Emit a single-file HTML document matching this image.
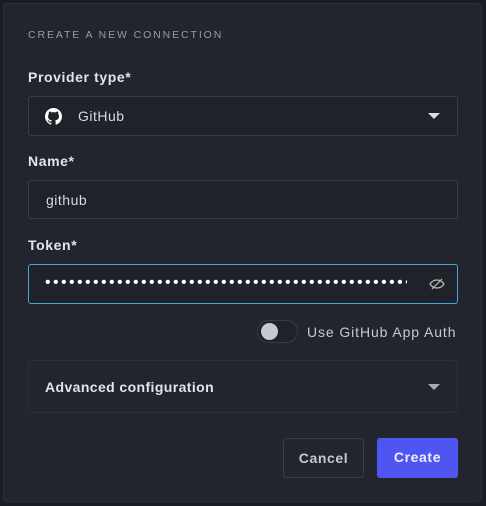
<!DOCTYPE html><html><head><style>
body{margin:0;width:486px;height:506px;background:#1b1d24;font-family:"Liberation Sans",sans-serif;position:relative;overflow:hidden}
.p{position:absolute;left:3px;top:3px;width:477px;height:497px;background:#22252d;border:1px solid #2c2f38;border-radius:4px}
.a{position:absolute}
.t{left:28px;top:29px;font-size:10.5px;letter-spacing:1.9px;color:#9a9ca3}
.l{left:28px;font-size:14px;font-weight:bold;color:#e3e4e8;letter-spacing:0.6px}
.in{left:28px;width:430px;height:38px;border:1px solid #3a3d47;border-radius:3px;background:#1f2229;color:#d8d9dd;font-size:14px;box-sizing:border-box;letter-spacing:0.5px}
.btn{height:40px;top:438px;border-radius:3px;font-size:14px;font-weight:bold;box-sizing:border-box;text-align:center;line-height:38px;letter-spacing:0.6px}
</style></head><body>
<div class="p"></div>
<div class="a t">CREATE A NEW CONNECTION</div>
<div class="a l" style="top:69px">Provider type*</div>
<div class="a in" style="top:96px;height:40px">
<svg style="position:absolute;left:16px;top:11px" width="17" height="17" viewBox="0 0 16 16"><path fill="#fff" d="M8 0C3.58 0 0 3.58 0 8c0 3.54 2.290 6.53 5.47 7.59.4.07.55-.17.55-.38v-1.33c-2.230.48-2.7-1.07-2.7-1.07-.36-.92-.89-1.170-.89-1.17-.73-.5.06-.49.06-.49.8.06 1.230.83 1.230.83.71 1.220 1.870.87 2.330.66.07-.52.28-.87.51-1.070-1.780-.2-3.64-.89-3.64-3.95 0-.87.31-1.59.82-2.150-.08-.2-.36-1.020.08-2.120 0 0 .67-.21 2.2.82a7.6 7.6 0 0 1 4 0c1.530-1.040 2.2-.82 2.2-.82.44 1.1.16 1.920.08 2.120.51.56.82 1.270.82 2.150 0 3.070-1.870 3.750-3.650 3.950.29.25.54.73.54 1.480v2.2c0 .21.15.46.55.38A8 8 0 0 0 16 8c0-4.420-3.580-8-8-8z"/></svg>
<span style="position:absolute;left:49px;top:11px">GitHub</span>
<div style="position:absolute;right:17px;top:16px;border-left:6px solid transparent;border-right:6px solid transparent;border-top:6px solid #ddd"></div></div>
<div class="a l" style="top:153px">Name*</div>
<div class="a in" style="top:180px;height:39px"><span style="position:absolute;left:17px;top:11px">github</span></div>
<div class="a l" style="top:237px">Token*</div>
<div class="a in" style="top:264px;height:40px;border-color:#4aa3df"><span style="position:absolute;left:16px;top:9px;font-size:16px;letter-spacing:2.4px;color:#fff;white-space:nowrap;overflow:hidden;width:362px">••••••••••••••••••••••••••••••••••••••••••••••••</span>
<svg style="position:absolute;right:12px;top:12px" width="16" height="14" viewBox="0 0 16 14"><path d="M1 7c2-3 4-4 7-4s5 1 7 4c-2 3-4 4-7 4S3 10 1 7z" fill="none" stroke="#bbb" stroke-width="1.2"/><path d="M3 12L13 2" stroke="#bbb" stroke-width="1.2"/></svg></div>
<div class="a" style="left:257px;top:320px;width:41px;height:23px;border:1px solid #3a3d47;border-radius:12px;box-sizing:border-box;background:#1f2229"><div style="position:absolute;left:3px;top:2px;width:17px;height:17px;border-radius:50%;background:#c7c9d1"></div></div>
<div class="a" style="left:307px;top:324px;font-size:14px;color:#c8c9ce;letter-spacing:0.9px">Use GitHub App Auth</div>
<div class="a" style="left:28px;top:360px;width:430px;height:53px;border:1px solid #2c2f38;border-radius:4px;box-sizing:border-box">
<span style="position:absolute;left:16px;top:18px;font-size:14px;font-weight:bold;color:#e3e4e8;letter-spacing:0.4px">Advanced configuration</span>
<div style="position:absolute;right:17px;top:23px;border-left:6px solid transparent;border-right:6px solid transparent;border-top:6px solid #aaa"></div></div>
<div class="a btn" style="left:283px;width:81px;border:1px solid #3a3d47;color:#c8c9ce">Cancel</div>
<div class="a btn" style="left:377px;width:81px;background:#4f55f0;color:#eef">Create</div>
</body></html>
